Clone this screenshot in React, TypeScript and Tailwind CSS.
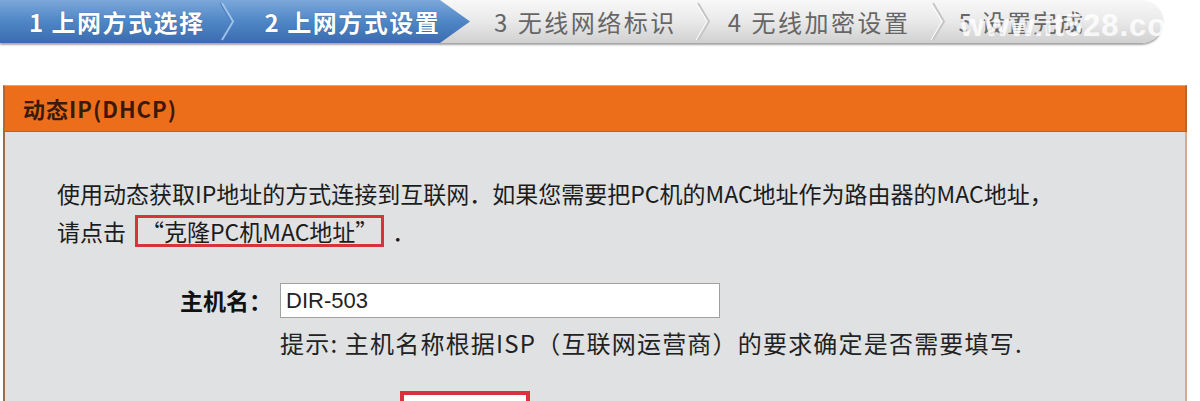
const cjk = "font-['Noto_Sans_CJK_SC','Noto_Sans',sans-serif]"

function Chevron({ light }: { light?: boolean }) {
  return (
    <svg width="16" height="43" viewBox="0 0 16 43" className="shrink-0">
      <polyline
        points="3,3 14,21.5 3,40"
        fill="none"
        stroke={light ? '#9fc0e8' : '#c6c6c6'}
        strokeWidth="2"
      />
      <polyline
        points="1,3 12,21.5 1,40"
        fill="none"
        stroke={light ? '#4a7cbc' : '#ffffff'}
        strokeWidth="1"
      />
    </svg>
  )
}

export default function App() {
  return (
    <div className={`w-[1200px] h-[401px] overflow-hidden bg-white ${cjk}`}>
      {/* wizard steps */}
      <div className="relative h-[43px] w-[1163px] rounded-r-[22px] bg-gradient-to-b from-[#f8f8f8] via-[#e9e9e9] to-[#d0d0d0] shadow-[0_2px_2px_rgba(0,0,0,0.35)] flex items-center">
        <div className="h-full w-[470px] shrink-0 flex items-center bg-gradient-to-b from-[#7ba7da] via-[#4f86c6] to-[#3a6caf] [clip-path:polygon(0_0,440px_0,470px_50%,440px_100%,0_100%)]">
          <span className="pl-[29px] text-[24px] font-bold text-white tracking-[1.5px] whitespace-nowrap [text-shadow:0_0_1px_#2a4f80]">
            1 上网方式选择
          </span>
          <div className="ml-[14px]">
            <Chevron light />
          </div>
          <span className="ml-[30px] text-[24px] font-bold text-white tracking-[1.5px] whitespace-nowrap [text-shadow:0_0_1px_#2a4f80]">
            2 上网方式设置
          </span>
        </div>
        <span className="ml-[24px] text-[24px] text-[#666] tracking-[2.5px] whitespace-nowrap">3 无线网络标识</span>
        <div className="ml-[18px]">
          <Chevron />
        </div>
        <span className="ml-[17px] text-[24px] text-[#666] tracking-[2.5px] whitespace-nowrap">4 无线加密设置</span>
        <div className="ml-[20px]">
          <Chevron />
        </div>
        <span className="ml-[12px] text-[24px] text-[#666] tracking-[2px] whitespace-nowrap">5 设置完成</span>
        <span className="absolute left-[960px] top-[3px] text-[31px] font-bold text-white/80 font-['Liberation_Sans',sans-serif] tracking-[1px] whitespace-nowrap">
          www.it528.co
        </span>
      </div>

      {/* DHCP panel */}
      <div className="mt-[42px] ml-[3px] w-[1184px]">
        <div className="h-[47px] bg-[#ec6e1b] border-t border-[#f0a070] border-b border-b-[#c85a16] border-x-2 border-x-[#b8662e] flex items-center pl-[18px]">
          <span className="text-[22px] font-bold text-[#3a1a0c] tracking-[1px]">动态IP(DHCP)</span>
        </div>
        <div className="h-[270px] bg-[#dfe1e3] border-x-2 border-l-[#9c6a4c] border-r-[#d9a990] pt-[42px] pl-[52px]">
          <p className="text-[23px] leading-[38px] text-[#1c1c1c] whitespace-nowrap">
            使用动态获取IP地址的方式连接到互联网．如果您需要把PC机的MAC地址作为路由器的MAC地址，
            <br />
            请点击
            <span className="ml-[9px] inline-block border-[3px] border-[#d8323c] leading-[26px] px-[3px]">
              “克隆PC机MAC地址”
            </span>
            <span className="ml-[8px]">．</span>
          </p>

          <div className="mt-[33px] flex items-center">
            <span className="w-[223px] pr-[8px] text-right text-[23px] font-bold text-[#111] whitespace-nowrap">
              主机名：
            </span>
            <div className="w-[440px] h-[35px] bg-white border border-[#a0a0a0] flex items-center pl-[5px] text-[22px] text-[#222] font-['Liberation_Sans',sans-serif]">
              DIR-503
            </div>
          </div>
          <p className="mt-[8px] ml-[223px] text-[24px] text-[#222] leading-[34px] tracking-[1.2px] whitespace-nowrap">
            提示: 主机名称根据ISP（互联网运营商）的要求确定是否需要填写.
          </p>
          <div className="mt-[31px] ml-[343px] w-[130px] h-[30px] border-[4px] border-[#d8323c] bg-white" />
        </div>
      </div>
    </div>
  )
}
